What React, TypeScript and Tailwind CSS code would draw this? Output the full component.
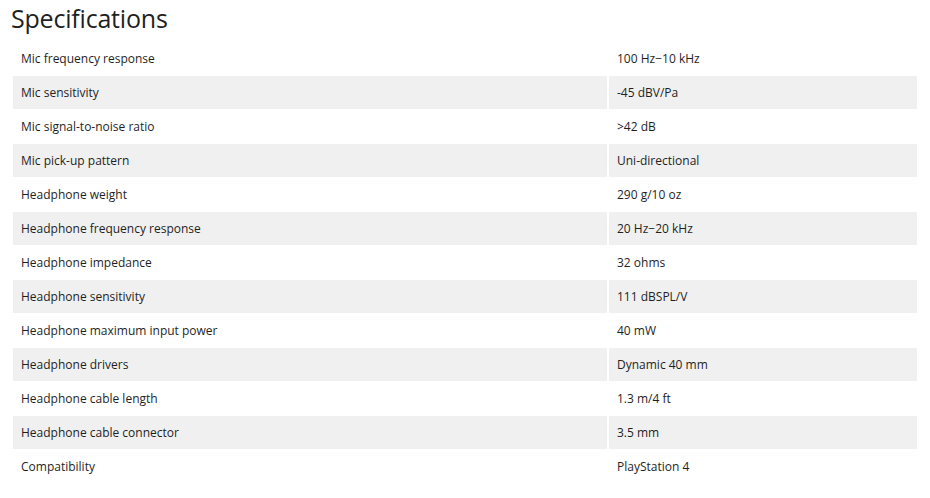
import React from "react";

const specs: [string, string][] = [
  ["Mic frequency response", "100 Hz\u221210 kHz"],
  ["Mic sensitivity", "-45 dBV/Pa"],
  ["Mic signal-to-noise ratio", ">42 dB"],
  ["Mic pick-up pattern", "Uni-directional"],
  ["Headphone weight", "290 g/10 oz"],
  ["Headphone frequency response", "20 Hz\u221220 kHz"],
  ["Headphone impedance", "32 ohms"],
  ["Headphone sensitivity", "111 dBSPL/V"],
  ["Headphone maximum input power", "40 mW"],
  ["Headphone drivers", "Dynamic 40 mm"],
  ["Headphone cable length", "1.3 m/4 ft"],
  ["Headphone cable connector", "3.5 mm"],
  ["Compatibility", "PlayStation 4"],
];

export default function App() {
  return (
    <div className="w-[930px] h-[498px] bg-white text-[#1f1f1f] font-['Open_Sans',sans-serif] overflow-hidden">
      <h2 className="pl-[11px] pt-0 h-[42px] text-[25px] leading-[36px] tracking-[-0.2px]">Specifications</h2>
      <div className="flex flex-col gap-[1px] pl-[13px] w-[917px]">
        {specs.map(([label, value], i) => (
          <div key={label} className="flex gap-[2px] h-[33px] text-[12px]">
            <div className={`w-[594px] flex items-center pl-2 pt-[1px] ${i % 2 === 1 ? "bg-[#f0f0f0]" : ""}`}>{label}</div>
            <div className={`flex-1 flex items-center pl-2 pt-[1px] ${i % 2 === 1 ? "bg-[#f0f0f0]" : ""}`}>{value}</div>
          </div>
        ))}
      </div>
    </div>
  );
}
